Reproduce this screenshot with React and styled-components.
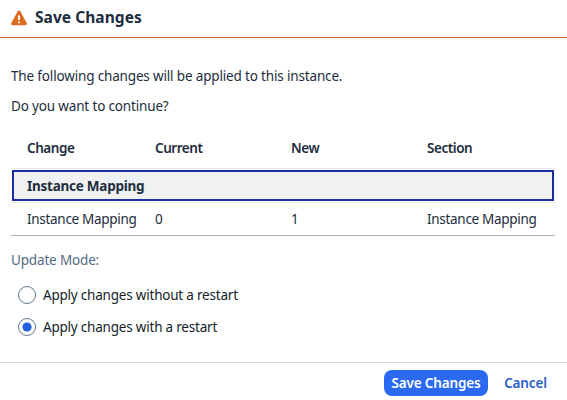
import React, { useState } from 'react';
import styled, { createGlobalStyle } from 'styled-components';

const GlobalStyle = createGlobalStyle`
  *, *::before, *::after { box-sizing: border-box; }
  body {
    margin: 0;
    background: #fff;
    color: #1d2d3e;
    font-family: "Noto Sans", "Open Sans", sans-serif;
    font-size: 13.5px;
    letter-spacing: -0.16px;
  }
`;

const Dialog = styled.section`
  display: flex;
  flex-direction: column;
  width: 567px;
  height: 400px;
  overflow: hidden;
  background: #fff;
`;

const Header = styled.header`
  display: flex;
  align-items: center;
  gap: 8px;
  flex: 0 0 38px;
  padding: 0 11px 2px;
  border-bottom: 1px solid #cf6a28;
`;

const Title = styled.h1`
  margin: 0 0 2px;
  font-size: 15.5px;
  line-height: 20px;
  font-weight: 700;
  letter-spacing: 0.05px;
`;

const Content = styled.main`
  flex: 1;
  padding: 23px 12px 0 11px;
`;

const Message = styled.p`
  margin: 0;
  height: 30px;
  line-height: 30px;
  white-space: nowrap;
`;

const Table = styled.div`
  margin-top: 11px;
  border-bottom: 1px solid #a8b2bd;
`;

const Row = styled.div`
  display: grid;
  grid-template-columns: 128px 136px 136px 1fr;
  align-items: center;
  height: ${(p) => (p.$head ? 36 : 32)}px;
  padding: 0 0 ${(p) => (p.$head ? 4 : 0)}px 16px;
  font-weight: ${(p) => (p.$head ? 600 : 400)};
  letter-spacing: ${(p) => (p.$head ? -0.45 : -0.3)}px;
  white-space: nowrap;
`;

const GroupRow = styled.div`
  display: flex;
  align-items: center;
  height: 35px;
  padding: 1px 1px;
  border-top: 1px solid #e5e5e5;
  border-bottom: 1px solid #e5e5e5;
`;

const GroupTitle = styled.div`
  flex: 1;
  height: 31px;
  padding-left: 13px;
  border: 2px solid #1a2fa2;
  background: #eff1f2;
  font-weight: 700;
  line-height: 28px;
  letter-spacing: -0.25px;
`;

const Label = styled.div`
  margin-top: 14px;
  height: 20px;
  line-height: 20px;
  color: #556b82;
`;

const Options = styled.div`
  display: flex;
  flex-direction: column;
  padding: 9px 0 0 7px;
`;

const Option = styled.label`
  display: flex;
  align-items: center;
  gap: 7px;
  height: 32px;
  color: #131e29;
  white-space: nowrap;
  letter-spacing: -0.21px;
`;

const Radio = styled.input`
  appearance: none;
  width: 18px;
  height: 18px;
  margin: 0;
  border: 1px solid #64778c;
  border-radius: 50%;
  background: ${(p) =>
    p.checked ? 'radial-gradient(circle, #235fdb 4.2px, #fff 4.9px)' : '#fff'};
`;

const Footer = styled.footer`
  display: flex;
  justify-content: flex-end;
  align-items: flex-start;
  gap: 8px;
  flex: 0 0 38px;
  padding: 7px 12px 0;
  border-top: 1px solid #d9d9d9;
`;

const Button = styled.button`
  height: 26px;
  width: ${(p) => (p.$primary ? 104 : 59)}px;
  padding: 0 0 1px;
  border: 0;
  border-radius: 8px;
  background: ${(p) => (p.$primary ? '#2b69f0' : 'transparent')};
  color: ${(p) => (p.$primary ? '#fff' : '#2a5fcd')};
  font: 600 13.5px "Noto Sans", "Open Sans", sans-serif;
  letter-spacing: -0.15px;
  white-space: nowrap;
`;

function WarningIcon() {
  return (
    <svg width="16" height="16" viewBox="0 0 16 16" aria-hidden="true">
      <path
        d="M6.7 1.3a1.5 1.5 0 0 1 2.6 0l6.4 11.8a1.5 1.5 0 0 1-1.3 2.2H1.6a1.5 1.5 0 0 1-1.3-2.2Z"
        fill="#de6e1f"
      />
      <path d="M8 5.4v4.5M8 11.4v1.9" stroke="#fff" strokeWidth="1.9" />
    </svg>
  );
}

const options = [
  ['without', 'Apply changes without a restart'],
  ['with', 'Apply changes with a restart'],
];

export default function App() {
  const [mode, setMode] = useState('with');
  return (
    <>
      <GlobalStyle />
      <Dialog>
        <Header>
          <WarningIcon />
          <Title>Save Changes</Title>
        </Header>
        <Content>
          <Message>The following changes will be applied to this instance.</Message>
          <Message>Do you want to continue?</Message>
          <Table>
            <Row $head>
              <span>Change</span>
              <span>Current</span>
              <span>New</span>
              <span>Section</span>
            </Row>
            <GroupRow>
              <GroupTitle>Instance Mapping</GroupTitle>
            </GroupRow>
            <Row>
              <span>Instance Mapping</span>
              <span>0</span>
              <span>1</span>
              <span>Instance Mapping</span>
            </Row>
          </Table>
          <Label>Update Mode:</Label>
          <Options>
            {options.map(([value, text]) => (
              <Option key={value}>
                <Radio
                  type="radio"
                  name="mode"
                  checked={mode === value}
                  onChange={() => setMode(value)}
                />
                {text}
              </Option>
            ))}
          </Options>
        </Content>
        <Footer>
          <Button $primary>Save Changes</Button>
          <Button>Cancel</Button>
        </Footer>
      </Dialog>
    </>
  );
}
